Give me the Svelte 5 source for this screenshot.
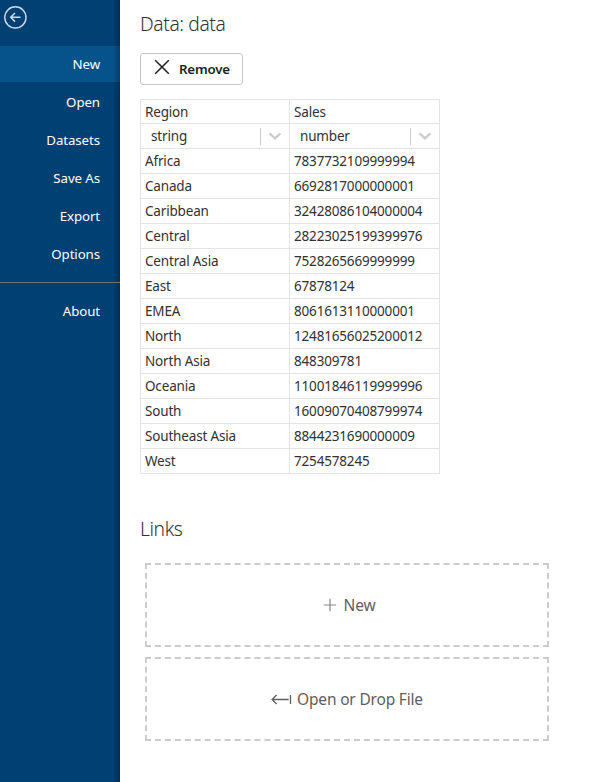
<script>
  const items = ['New', 'Open', 'Datasets', 'Save As', 'Export', 'Options'];
  const types = ['string', 'number'];
  const rows = [
    ['Africa', '7837732109999994'],
    ['Canada', '6692817000000001'],
    ['Caribbean', '32428086104000004'],
    ['Central', '28223025199399976'],
    ['Central Asia', '7528265669999999'],
    ['East', '67878124'],
    ['EMEA', '8061613110000001'],
    ['North', '12481656025200012'],
    ['North Asia', '848309781'],
    ['Oceania', '11001846119999996'],
    ['South', '16009070408799974'],
    ['Southeast Asia', '8844231690000009'],
    ['West', '7254578245']
  ];
  let active = $state('New');
</script>

<div class="app">
  <nav>
    <button class="back" aria-label="Back">
      <svg width="24" height="24" viewBox="0 0 24 24" fill="none" stroke="#d3dbe2">
        <circle cx="11.4" cy="11.4" r="10.6" stroke-width="1.4" />
        <path d="M16.5 11.3H6.8M11 7L6.7 11.3L11 15.6" stroke-width="1.5" />
      </svg>
    </button>
    {#each items as item}
      <button class="item" class:active={active === item} onclick={() => (active = item)}>{item}</button>
    {/each}
    <hr />
    <button class="item">About</button>
  </nav>

  <main>
    <h2>Data: data</h2>
    <button class="remove">
      <svg width="16" height="16" viewBox="0 0 16 16" fill="none" stroke="#201f1e" stroke-width="1.5">
        <path d="M1.2 1.2L14.8 14.8M14.8 1.2L1.2 14.8" />
      </svg>
      <span>Remove</span>
    </button>

    <div class="table">
      <div class="row head"><div class="cell">Region</div><div class="cell">Sales</div></div>
      <div class="row">
        {#each types as type}
          <div class="cell select">
            <span>{type}</span>
            <i></i>
            <svg width="14" height="10" viewBox="0 0 14 10" fill="none" stroke="#ccc" stroke-width="2.3">
              <path d="M1.6 2.3L7 7.4L12.4 2.3" />
            </svg>
          </div>
        {/each}
      </div>
      {#each rows as [region, sales]}
        <div class="row"><div class="cell">{region}</div><div class="cell">{sales}</div></div>
      {/each}
    </div>

    <h2 class="links">Links</h2>
    <button class="drop">
      <svg class="plus" width="14" height="14" viewBox="0 0 14 14" stroke="#888" stroke-width="1.2">
        <path d="M7 .8V13.2M.8 7H13.2" />
      </svg>
      <span class="newlabel">New</span>
    </button>
    <button class="drop">
      <svg class="arrow" width="21" height="11" viewBox="0 0 21 11" fill="none" stroke="#605e5c" stroke-width="1.3">
        <path d="M19.5 1V10M17.7 5.5H1.2M5.6 1L1.1 5.5L5.6 10" />
      </svg>
      <span>Open or Drop File</span>
    </button>
  </main>
</div>

<style>
  :global(body) {
    background: #fff;
  }
  .app {
    display: flex;
    height: 782px;
    overflow: hidden;
    font-family: 'Noto Sans', 'Open Sans', sans-serif;
    font-size: 13.5px;
    letter-spacing: -0.17px;
    color: #323130;
  }
  button {
    font: inherit;
    letter-spacing: inherit;
    margin: 0;
    padding: 0;
    border: 0;
    background: none;
    cursor: pointer;
  }
  nav {
    display: flex;
    flex-direction: column;
    flex: none;
    width: 120px;
    background:
      linear-gradient(to left, rgba(0, 0, 0, 0.25), transparent) right / 7px 100% no-repeat,
      #004073;
  }
  .back {
    height: 46px;
    padding: 6px 0 0 4px;
    text-align: left;
    line-height: 0;
    display: flex;
  }
  .item {
    height: 36px;
    margin-bottom: 2px;
    padding-right: 20px;
    font-size: 13.3px;
    text-align: right;
    letter-spacing: -0.1px;
    color: #fff;
  }
  .active {
    background: linear-gradient(to left, rgba(0, 0, 0, 0.25), transparent) right / 7px 100% no-repeat, #06528a;
  }
  hr {
    width: 100%;
    margin: 8px 0 10px;
    border: 0;
    border-top: 1px solid #736f6e;
  }
  main {
    padding: 9px 0 0 20px;
    width: 414px;
  }
  h2 {
    margin: 0;
    height: 30px;
    line-height: 30px;
    font-size: 19.3px;
    font-weight: 300;
    letter-spacing: -0.4px;
  }
  .remove {
    display: flex;
    align-items: center;
    box-sizing: border-box;
    width: 103px;
    height: 32px;
    margin: 14px 0;
    padding-left: 13px;
    gap: 9px;
    border: 1px solid #c8c6c4;
    border-radius: 3px;
    font-size: 13.3px;
    font-weight: 600;
    letter-spacing: -0.2px;
    color: #201f1e;
  }
  .remove svg {
    margin-top: -5px;
  }
  .table {
    width: 300px;
    box-sizing: border-box;
    border-left: 1px solid #e4e4e4;
    border-top: 1px solid #e4e4e4;
  }
  .row {
    display: flex;
    height: 25px;
    line-height: 24px;
  }
  .head {
    height: 24px;
  }
  .cell {
    flex: 1;
    box-sizing: border-box;
    padding-left: 4px;
    border-right: 1px solid #e4e4e4;
    border-bottom: 1px solid #e4e4e4;
  }
  .cell:first-child {
    flex: none;
    width: 149px;
  }
  .select {
    display: flex;
    align-items: center;
    padding: 0 7px 0 10px;
  }
  .select span {
    flex: 1;
  }
  .select i {
    width: 1px;
    height: 17px;
    margin-right: 7px;
    background: #ccc;
  }
  .links {
    margin: 40px 0 19px;
  }
  .drop {
    display: flex;
    align-items: center;
    justify-content: center;
    box-sizing: border-box;
    width: 404px;
    height: 84px;
    margin: 0 0 10px 5px;
    border: 2px dashed #ccc;
    font-size: 15.5px;
    letter-spacing: -0.18px;
    color: #605e5c;
  }
  .plus {
    margin-left: 4px;
  }
  .newlabel {
    margin-left: 7px;
  }
  .arrow {
    margin-right: 5px;
  }
</style>
